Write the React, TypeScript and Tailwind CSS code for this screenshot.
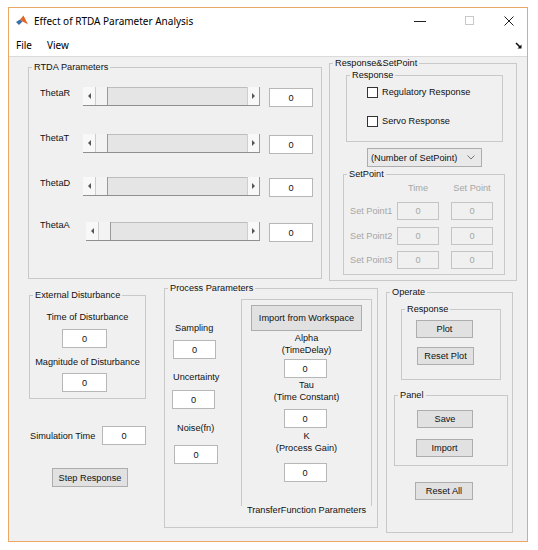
import React from "react";

function Group({ title, className, children }: { title: string; className: string; children?: React.ReactNode }) {
  return (
    <fieldset className={`min-w-0 border border-[#c9c9c9] ${className}`}>
      <legend className="ml-[3px] px-[2px] leading-[12px]">{title}</legend>
      {children}
    </fieldset>
  );
}

function Edit({ className = "", disabled = false }: { className?: string; disabled?: boolean }) {
  return (
    <div
      className={`flex shrink-0 items-center justify-center border ${
        disabled ? "border-[#c4c4c4] bg-[#f0f0f0] text-[#a6a6a6]" : "border-[#b7b7b7] bg-white"
      } ${className}`}
    >
      0
    </div>
  );
}

function Button({ label, className }: { label: string; className: string }) {
  return (
    <div className={`flex shrink-0 items-center justify-center border border-[#adadad] bg-[#e1e1e1] ${className}`}>
      {label}
    </div>
  );
}

function Arrow({ dir }: { dir: "left" | "right" }) {
  return dir === "left" ? (
    <div className="h-0 w-0 border-y-[3px] border-r-[3px] border-y-transparent border-r-[#555]" />
  ) : (
    <div className="h-0 w-0 border-y-[3px] border-l-[3px] border-y-transparent border-l-[#555]" />
  );
}

function Slider({ className }: { className: string }) {
  return (
    <div className={`flex h-[19px] shrink-0 border-b border-[#8f8f8f] ${className}`}>
      <div className="flex w-[13px] items-center justify-center border-r border-[#cdcdcd] bg-[#f8f8f8]">
        <Arrow dir="left" />
      </div>
      <div className="w-[12px] border-r border-[#9a9a9a] bg-[#f3f3f3]" />
      <div className="flex-1 border-t border-[#bdbdbd] bg-[#e5e5e5]" />
      <div className="flex w-[13px] items-center justify-center border-l border-r border-[#cdcdcd] border-r-[#9a9a9a] bg-[#f8f8f8]">
        <Arrow dir="right" />
      </div>
    </div>
  );
}

function Check({ label, className }: { label: string; className: string }) {
  return (
    <div className={`flex items-center pl-[20px] ${className}`}>
      <div className="h-[11px] w-[11px] border border-[#333] bg-white" />
      <span className="ml-[4px]">{label}</span>
    </div>
  );
}

const thetas = [
  { name: "ThetaR", rowMt: "mt-[14px]", labelMt: "mt-[0px]", labelW: "w-[43px]", sliderW: "w-[177px]" },
  { name: "ThetaT", rowMt: "mt-[27px]", labelMt: "-mt-[2px]", labelW: "w-[43px]", sliderW: "w-[177px]" },
  { name: "ThetaD", rowMt: "mt-[23px]", labelMt: "mt-[0px]", labelW: "w-[43px]", sliderW: "w-[177px]" },
  { name: "ThetaA", rowMt: "mt-[25px]", labelMt: "-mt-[3px]", labelW: "w-[46px]", sliderW: "w-[174px]" },
];

export default function App() {
  return (
    <div className="min-h-[550px] bg-white pl-[8px] pt-[7px] font-['Liberation_Sans',Arial,sans-serif] text-[9.2px] leading-[12px] text-[#111]">
      <div className="flex h-[535px] w-[520px] flex-col border border-[#eaa866]">
        {/* title bar */}
        <div className="flex h-[25px] shrink-0 items-center bg-white font-['Noto_Sans',sans-serif] text-[10px] text-black">
          <svg className="ml-[7px]" width="12" height="11" viewBox="0 0 12 11">
            <path d="M0 7 L4 4.5 L6.5 6.5 L3 10 Z" fill="#3a6fa8" />
            <path d="M4 4.5 L7.5 0.5 L12 9.5 L9.5 8 L6.5 6.5 Z" fill="#e2652a" />
          </svg>
          <span className="ml-[6px]">Effect of RTDA Parameter Analysis</span>
          <div className="flex-1" />
          <svg width="12" height="10" viewBox="0 0 12 10">
            <path d="M0 5.5 H12" stroke="#222" strokeWidth="1" />
          </svg>
          <svg className="ml-[39px]" width="9" height="9" viewBox="0 0 9 9">
            <rect x="0.5" y="0.5" width="8" height="8" fill="none" stroke="#c8c8c8" />
          </svg>
          <svg className="ml-[30px] mr-[13px]" width="10" height="10" viewBox="0 0 10 10">
            <path d="M0.5 0.5 L9.5 9.5 M9.5 0.5 L0.5 9.5" stroke="#222" strokeWidth="1" />
          </svg>
        </div>

        {/* menu bar */}
        <div className="flex h-[24px] shrink-0 items-center border-b border-[#dadada] bg-white pt-[1px] font-['Noto_Sans',sans-serif] text-[10px] text-black">
          <span className="ml-[7px]">File</span>
          <span className="ml-[15px]">View</span>
          <div className="flex-1" />
          <svg className="mr-[5px]" width="7" height="7" viewBox="0 0 7 7">
            <path d="M1 1 L5.5 5.5" stroke="#111" strokeWidth="1.6" />
            <path d="M6.5 2.5 V6.5 H2.5 Z" fill="#111" />
          </svg>
        </div>

        {/* body */}
        <div className="flex flex-1 flex-col bg-[#f0f0f0]">
          {/* top row */}
          <div className="flex items-start">
            <Group title="RTDA Parameters" className="ml-[19px] mt-[4px] h-[218px] w-[294px] shrink-0">
              <div className="pl-[11px]">
                {thetas.map((t) => (
                  <div key={t.name} className={`flex items-start ${t.rowMt}`}>
                    <span className={`${t.labelW} ${t.labelMt} shrink-0`}>{t.name}</span>
                    <Slider className={t.sliderW} />
                    <Edit className="ml-[9px] mt-[1px] h-[19px] w-[44px]" />
                  </div>
                ))}
              </div>
            </Group>

            <Group title="Response&SetPoint" className="ml-[7px] h-[224px] w-[188px] shrink-0">
              <Group title="Response" className="ml-[16px] h-[73px] w-[157px]">
                <Check label="Regulatory Response" className="mt-[5px]" />
                <Check label="Servo Response" className="mt-[17px]" />
              </Group>

              <div className="ml-[37px] mt-[6px] flex h-[19px] w-[115px] items-center border border-[#adadad] bg-[#e9e9e9] pl-[3px]">
                <span className="flex-1">(Number of SetPoint)</span>
                <svg className="mr-[6px]" width="8" height="5" viewBox="0 0 8 5">
                  <path d="M0.5 0.5 L4 4 L7.5 0.5" fill="none" stroke="#777" strokeWidth="1" />
                </svg>
              </div>

              <Group title="SetPoint" className="ml-[13px] mt-[1px] h-[107px] w-[162px]">
                <div className="mt-[2px] flex text-[#a6a6a6]">
                  <div className="w-[53px]" />
                  <div className="w-[42px] text-center">Time</div>
                  <div className="ml-[12px] w-[42px] text-center">Set Point</div>
                </div>
                {["mt-[8px]", "mt-[7px]", "mt-[6px]"].map((mt, i) => (
                  <div key={i} className={`flex items-center ${mt}`}>
                    <span className="w-[53px] pl-[6px] text-[#a6a6a6]">Set Point{i + 1}</span>
                    <Edit disabled className="h-[18px] w-[42px]" />
                    <Edit disabled className="ml-[12px] h-[18px] w-[42px]" />
                  </div>
                ))}
              </Group>
            </Group>
          </div>

          {/* bottom row */}
          <div className="flex items-start">
            <div className="ml-[20px] mt-[8px] flex w-[117px] shrink-0 flex-col">
              <Group title="External Disturbance" className="h-[110px] w-[117px]">
                <div className="mt-[10px] text-center">Time of Disturbance</div>
                <Edit className="ml-[32px] mt-[6px] h-[19px] w-[45px]" />
                <div className="mt-[8px] text-center">Magnitude of Disturbance</div>
                <Edit className="ml-[32px] mt-[5px] h-[19px] w-[45px]" />
              </Group>

              <div className="mt-[27px] flex items-center">
                <span className="ml-[1px] w-[72px]">Simulation Time</span>
                <Edit className="h-[19px] w-[44px]" />
              </div>

              <Button label="Step Response" className="ml-[23px] mt-[23px] h-[19px] w-[76px]" />
            </div>

            <Group title="Process Parameters" className="ml-[18px] mt-[1px] h-[246px] w-[214px] shrink-0">
              <div className="flex items-start">
                <div className="ml-[7px] flex w-[47px] shrink-0 flex-col items-start">
                  <span className="ml-[3px] mt-[28px]">Sampling</span>
                  <Edit className="ml-[1px] mt-[6px] h-[19px] w-[43px]" />
                  <span className="ml-[1px] mt-[12px]">Uncertainty</span>
                  <Edit className="mt-[7px] h-[19px] w-[43px]" />
                  <span className="ml-[5px] mt-[13px]">Noise(fn)</span>
                  <Edit className="ml-[2px] mt-[11px] h-[19px] w-[44px]" />
                </div>

                <div className="ml-[22px] mt-[5px] flex w-[131px] shrink-0 flex-col items-center">
                  <div className="flex h-[207px] w-[131px] flex-col items-center border-x border-t border-[#c9c9c9] text-center">
                    <Button label="Import from Workspace" className="mt-[5px] h-[26px] w-[111px]" />
                    <span className="mt-[1px]">Alpha</span>
                    <span>(TimeDelay)</span>
                    <Edit className="mr-[3px] mt-[3px] h-[19px] w-[43px]" />
                    <span className="mt-[1px]">Tau</span>
                    <span>(Time Constant)</span>
                    <Edit className="mr-[3px] mt-[6px] h-[19px] w-[43px]" />
                    <span className="mt-[2px]">K</span>
                    <span>(Process Gain)</span>
                    <Edit className="mr-[3px] mt-[9px] h-[19px] w-[43px]" />
                  </div>
                  <span className="-mt-[2px] bg-[#f0f0f0]">TransferFunction Parameters</span>
                </div>
              </div>
            </Group>

            <Group title="Operate" className="ml-[8px] mt-[5px] h-[247px] w-[127px] shrink-0">
              <Group title="Response" className="ml-[14px] mt-[5px] h-[77px] w-[100px]">
                <Button label="Plot" className="ml-[14px] mt-[5px] h-[18px] w-[57px]" />
                <Button label="Reset Plot" className="ml-[15px] mt-[9px] h-[18px] w-[57px]" />
              </Group>
              <Group title="Panel" className="ml-[7px] mt-[9px] h-[77px] w-[114px]">
                <Button label="Save" className="ml-[22px] mt-[9px] h-[18px] w-[56px]" />
                <Button label="Import" className="ml-[21px] mt-[11px] h-[18px] w-[57px]" />
              </Group>
              <Button label="Reset All" className="ml-[28px] mt-[16px] h-[18px] w-[58px]" />
            </Group>
          </div>
        </div>
      </div>
    </div>
  );
}
